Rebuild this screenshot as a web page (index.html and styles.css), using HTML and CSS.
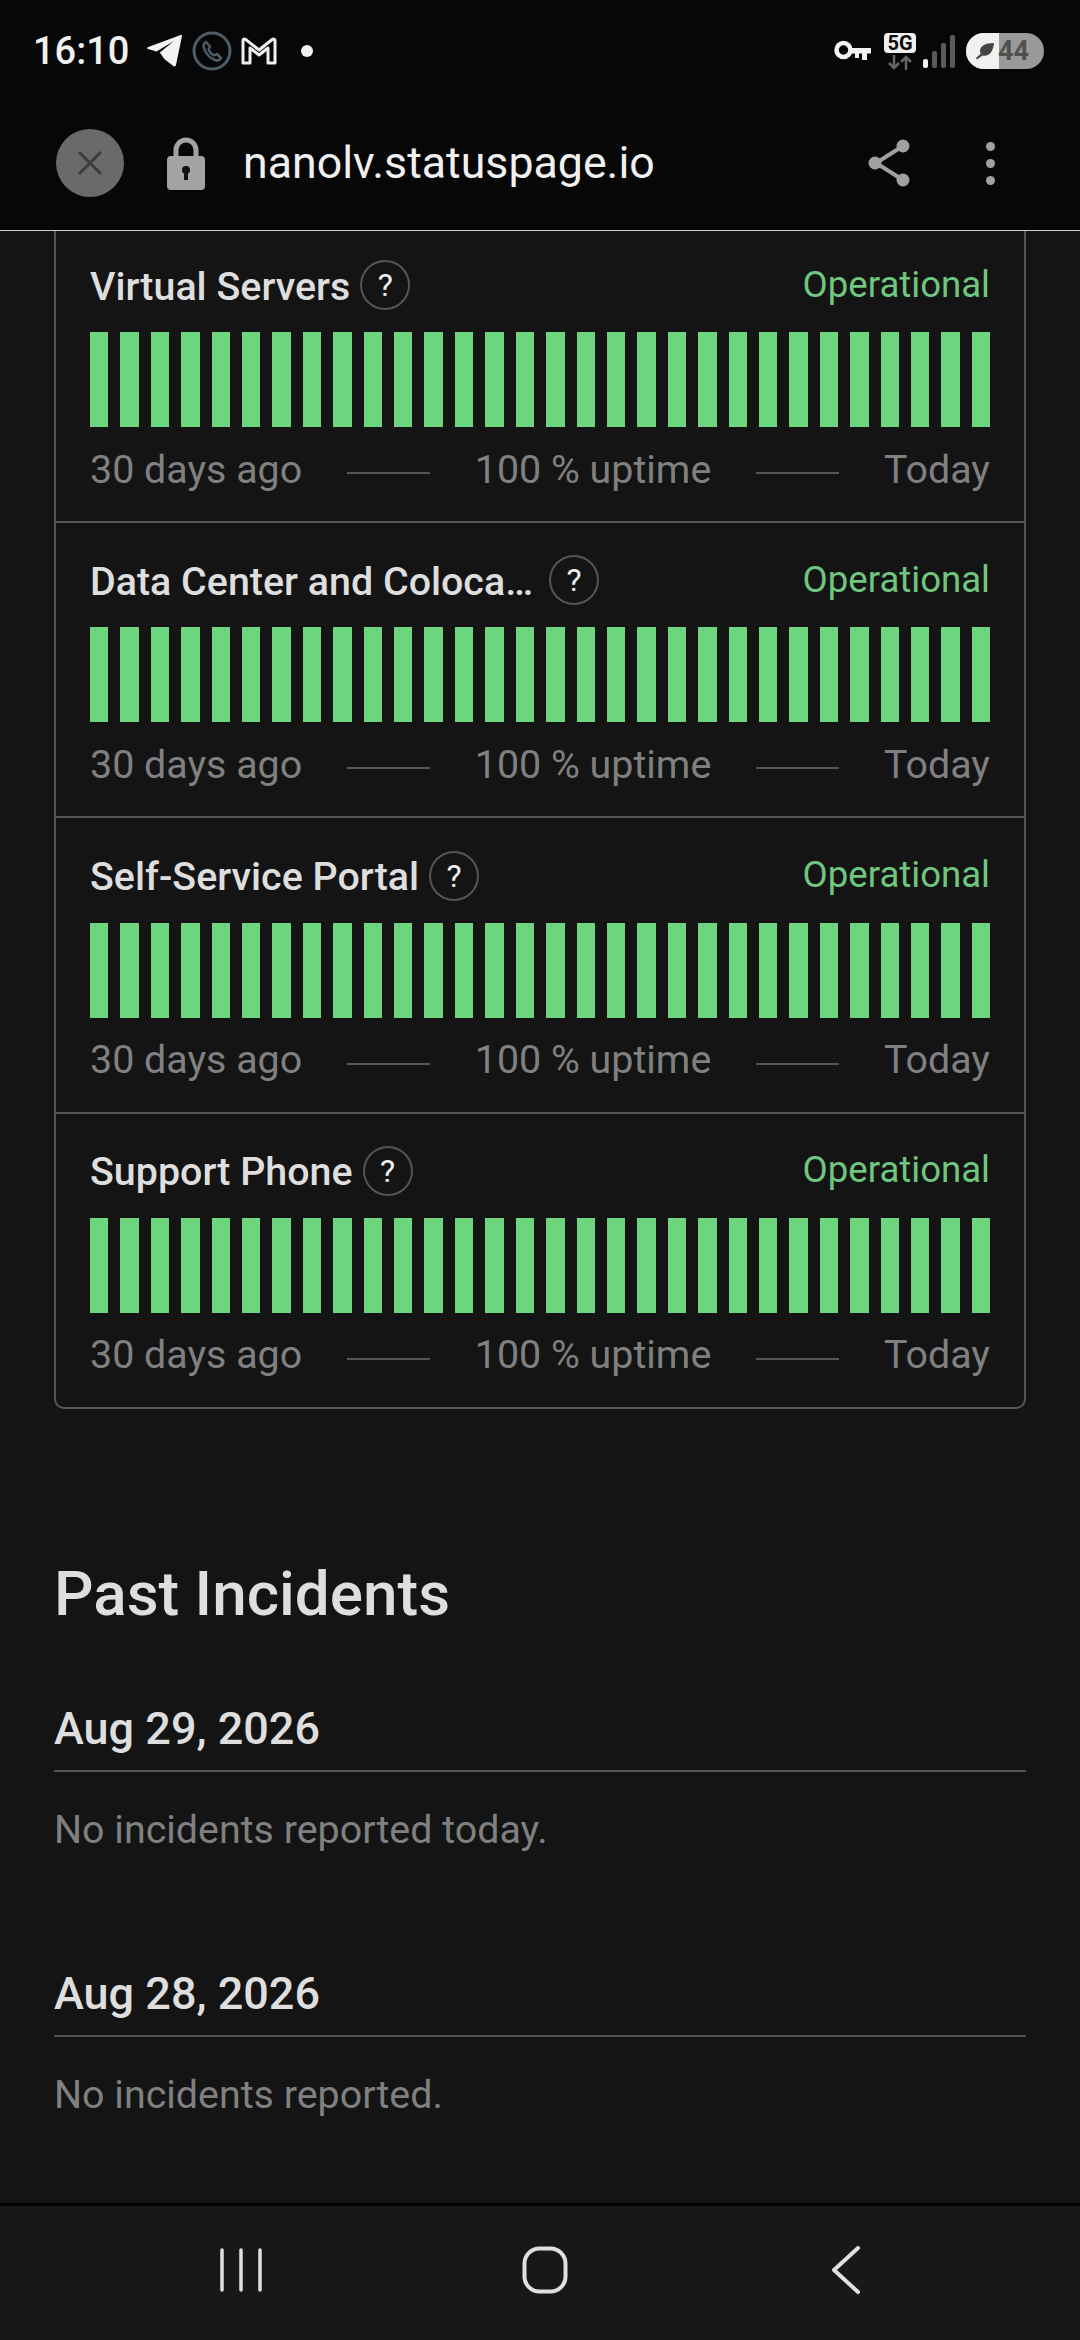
FILE: index.html
```html
<!DOCTYPE html>
<html lang="en">
<head>
    <meta charset="UTF-8">
    <meta name="viewport" content="width=device-width, initial-scale=1.0">
    <title>nanolv.statuspage.io</title>
    <link rel="stylesheet" href="styles.css">
</head>
<body>
    <div class="screen">
        <header class="chrome">
            <div class="status-bar">
                <div class="status-left">
                    <span class="clock">16:10</span>
                    <svg class="ic-telegram" width="36" height="32" viewBox="0 0 36 32"><path d="M35 1 29 30c-.3 1.400-1.500 1.800-2.700 1l-9-7-4.500-6.500L27 6 9.500 16.500 1 14c-1.300-.5-1.300-1.500.3-2.100L33 .2C34.300-.3 35.300 0 35 1Z" fill="#f2f2f2"/></svg>
                    <svg class="ic-call" width="40" height="40" viewBox="0 0 40 40"><circle cx="20" cy="20" r="18" fill="none" stroke="#4d5c65" stroke-width="3"/><path d="M14 11c-2 1-3 3-2 6 1.500 5 6 10 11 12 3 1 5 0 6-2l-4-4-3 1.500c-2-1-4.500-3.500-5.500-6l1.500-3Z" fill="none" stroke="#4d5c65" stroke-width="2.500" stroke-linejoin="round"/></svg>
                    <svg class="ic-mail" width="36" height="28" viewBox="0 0 36 28"><path d="M2 26V3.500c0-1.500 1.500-2 2.500-1.200L18 13 31.500 2.300c1-.8 2.500-.3 2.500 1.200V26H27V11L18 18 9 11V26Z" fill="none" stroke="#f0f0f0" stroke-width="3" stroke-linejoin="round"/></svg>
                    <span class="status-dot"></span>
                </div>
                <div class="status-right">
                    <svg class="ic-key" width="38" height="22" viewBox="0 0 38 22"><circle cx="9.500" cy="10" r="7" fill="none" stroke="#f2f2f2" stroke-width="4.500"/><path d="M16 8h21v5.500h-4V20h-5v-6.500h-3V18h-4v-4.500h-5Z" fill="#f2f2f2"/></svg>
                    <div class="net">
                        <span class="net-badge">5G</span>
                        <svg width="24" height="15" viewBox="0 0 24 15"><path d="M6 0v13M1 8l5 5 5-5M18 15V2M13 7l5-5 5 5" fill="none" stroke="#666" stroke-width="2.500"/></svg>
                    </div>
                    <div class="signal">
                        <span class="sig sig-1"></span>
                        <span class="sig sig-2"></span>
                        <span class="sig sig-3"></span>
                        <span class="sig sig-4"></span>
                    </div>
                    <div class="battery">
                        <span class="battery-fill"></span>
                        <svg class="ic-leaf" width="20" height="17" viewBox="0 0 20 17"><path d="M19 0C10 0 5 3 5 8c0 1 .3 2 .8 2.800L1 15l1 1.500 5.500-4C13 14 18 10 19 0Z" fill="#444"/></svg>
                        <span class="battery-num">44</span>
                    </div>
                </div>
            </div>
            <div class="toolbar">
                <div class="close-btn">
                    <svg width="24" height="24" viewBox="0 0 24 24"><path d="M1 1 23 23M23 1 1 23" stroke="#3c3c3c" stroke-width="3"/></svg>
                </div>
                <svg class="ic-lock" width="38" height="53" viewBox="0 0 38 53"><path d="M9 21V13a10 10 0 0 1 20 0v8" fill="none" stroke="#a3a3a3" stroke-width="5"/><rect y="19" width="38" height="34" rx="4" fill="#a3a3a3"/><circle cx="19" cy="33" r="4" fill="#111"/><rect x="17" y="34" width="4" height="9" fill="#111"/></svg>
                <span class="url">nanolv.statuspage.io</span>
                <svg class="ic-share" width="44" height="48" viewBox="0 0 44 48"><path d="M35 7 8 24l27 17" fill="none" stroke="#a0a0a0" stroke-width="4"/><circle cx="35" cy="7" r="6.500" fill="#a0a0a0"/><circle cx="7" cy="24" r="6.500" fill="#a0a0a0"/><circle cx="35" cy="41" r="6.500" fill="#a0a0a0"/></svg>
                <div class="menu-dots"><span></span><span></span><span></span></div>
            </div>
        </header>

        <main class="content">
            <div class="components">
                <div class="comp first">
                    <div class="comp-head">
                        <span class="comp-name">Virtual Servers</span>
                        <span class="help">?</span>
                        <span class="comp-status">Operational</span>
                    </div>
                    <div class="bars"><i></i><i></i><i></i><i></i><i></i><i></i><i></i><i></i><i></i><i></i><i></i><i></i><i></i><i></i><i></i><i></i><i></i><i></i><i></i><i></i><i></i><i></i><i></i><i></i><i></i><i></i><i></i><i></i><i></i><i></i></div>
                    <div class="legend">
                        <span>30 days ago</span><span class="spacer"></span><span>100 % uptime</span><span class="spacer"></span><span>Today</span>
                    </div>
                </div>
                <div class="comp">
                    <div class="comp-head">
                        <span class="comp-name clipped">Data Center and Coloca…</span>
                        <span class="help">?</span>
                        <span class="comp-status">Operational</span>
                    </div>
                    <div class="bars"><i></i><i></i><i></i><i></i><i></i><i></i><i></i><i></i><i></i><i></i><i></i><i></i><i></i><i></i><i></i><i></i><i></i><i></i><i></i><i></i><i></i><i></i><i></i><i></i><i></i><i></i><i></i><i></i><i></i><i></i></div>
                    <div class="legend">
                        <span>30 days ago</span><span class="spacer"></span><span>100 % uptime</span><span class="spacer"></span><span>Today</span>
                    </div>
                </div>
                <div class="comp">
                    <div class="comp-head">
                        <span class="comp-name">Self-Service Portal</span>
                        <span class="help">?</span>
                        <span class="comp-status">Operational</span>
                    </div>
                    <div class="bars"><i></i><i></i><i></i><i></i><i></i><i></i><i></i><i></i><i></i><i></i><i></i><i></i><i></i><i></i><i></i><i></i><i></i><i></i><i></i><i></i><i></i><i></i><i></i><i></i><i></i><i></i><i></i><i></i><i></i><i></i></div>
                    <div class="legend">
                        <span>30 days ago</span><span class="spacer"></span><span>100 % uptime</span><span class="spacer"></span><span>Today</span>
                    </div>
                </div>
                <div class="comp">
                    <div class="comp-head">
                        <span class="comp-name">Support Phone</span>
                        <span class="help">?</span>
                        <span class="comp-status">Operational</span>
                    </div>
                    <div class="bars"><i></i><i></i><i></i><i></i><i></i><i></i><i></i><i></i><i></i><i></i><i></i><i></i><i></i><i></i><i></i><i></i><i></i><i></i><i></i><i></i><i></i><i></i><i></i><i></i><i></i><i></i><i></i><i></i><i></i><i></i></div>
                    <div class="legend">
                        <span>30 days ago</span><span class="spacer"></span><span>100 % uptime</span><span class="spacer"></span><span>Today</span>
                    </div>
                </div>
            </div>

            <h2 class="past-title">Past Incidents</h2>

            <section class="day">
                <h3 class="day-date">Aug 29, 2026</h3>
                <p class="day-note">No incidents reported today.</p>
            </section>
            <section class="day">
                <h3 class="day-date">Aug 28, 2026</h3>
                <p class="day-note">No incidents reported.</p>
            </section>
        </main>

        <nav class="nav-bar">
            <svg width="44" height="46" viewBox="0 0 44 46"><path d="M3 3v40M22 3v40M41 3v40" stroke="#e0e0e0" stroke-width="3.500" stroke-linecap="round"/></svg>
            <svg class="nav-home" width="46" height="48" viewBox="0 0 46 48"><rect x="2.500" y="2.500" width="41" height="43" rx="15" fill="none" stroke="#e0e0e0" stroke-width="4"/></svg>
            <svg class="nav-back" width="30" height="48" viewBox="0 0 30 48"><path d="M27 2 3 24l24 22" fill="none" stroke="#e0e0e0" stroke-width="4" stroke-linecap="round" stroke-linejoin="round"/></svg>
        </nav>
    </div>
</body>
</html>
```

FILE: styles.css
```css
* {
    box-sizing: border-box;
}

body {
    margin: 0;
    background: #141414;
    font-family: 'Roboto', sans-serif;
}

.screen {
    width: 1080px;
    height: 2340px;
    display: flex;
    flex-direction: column;
    overflow: hidden;
}

/* browser chrome */
.chrome {
    height: 231px;
    flex: none;
    background: #070707;
    border-bottom: 1px solid #d0d0d0;
}

.status-bar {
    height: 90px;
    padding: 12px 36px 0 33px;
    display: flex;
    justify-content: space-between;
    align-items: center;
}

.status-left,
.status-right {
    display: flex;
    align-items: center;
}

.clock {
    font-size: 38px;
    font-weight: 500;
    color: #f0f0f0;
    width: 114px;
}

.ic-call {
    margin: 0 0 0 9px;
}

.ic-mail {
    margin-left: 9px;
}

.status-dot {
    width: 12px;
    height: 12px;
    margin-left: 24px;
    border-radius: 50%;
    background: #f0f0f0;
}

.ic-key {
    margin-right: 12px;
}

.net {
    width: 32px;
    display: flex;
    flex-direction: column;
    align-items: center;
    gap: 2px;
    margin-right: 7px;
}

.net-badge {
    width: 32px;
    height: 20px;
    border-radius: 4px;
    background: #f0f0f0;
    color: #0a0a0a;
    font-size: 20px;
    font-weight: 700;
    line-height: 20px;
    text-align: center;
}

.signal {
    display: flex;
    align-items: flex-end;
    gap: 4px;
    height: 34px;
    margin-right: 11px;
}

.sig {
    width: 5px;
    border-radius: 2px;
    background: #5a5a5a;
}

.sig-1 {
    height: 9px;
    background: #f0f0f0;
}

.sig-2 {
    height: 17px;
}

.sig-3 {
    height: 25px;
}

.sig-4 {
    height: 33px;
}

.battery {
    position: relative;
    width: 78px;
    height: 36px;
    border-radius: 18px;
    background: #9a9a9a;
    overflow: hidden;
    display: flex;
    align-items: center;
}

.battery-fill {
    position: absolute;
    left: 0;
    top: 0;
    width: 33px;
    height: 36px;
    background: #f0f0f0;
}

.ic-leaf {
    position: relative;
    margin-left: 9px;
}

.battery-num {
    position: relative;
    margin-left: 3px;
    font-size: 27px;
    font-weight: 700;
    color: #505050;
}

.toolbar {
    height: 140px;
    padding: 6px 85px 0 56px;
    display: flex;
    align-items: center;
}

.close-btn {
    width: 68px;
    height: 68px;
    border-radius: 50%;
    background: #6a6a6a;
    display: flex;
    justify-content: center;
    align-items: center;
}

.ic-lock {
    margin-left: 43px;
}

.url {
    margin-left: 38px;
    font-size: 44.7px;
    color: #f0f0f0;
    flex: 1;
}

.ic-share {
    margin-right: 74px;
}

.menu-dots {
    display: flex;
    flex-direction: column;
    gap: 8px;
}

.menu-dots span {
    width: 9px;
    height: 9px;
    border-radius: 50%;
    background: #a0a0a0;
}

/* page */
.content {
    flex: 1;
    padding: 0 54px;
    overflow: hidden;
}

.components {
    border: 2px solid #555;
    border-top: none;
    border-radius: 0 0 10px 10px;
}

.comp {
    padding: 32.3px 34px 27px;
    border-top: 2px solid #555;
}

.comp.first {
    padding-top: 29px;
    border-top: none;
}

.comp-head {
    height: 50px;
    display: flex;
    align-items: center;
}

.comp-name {
    padding-top: 2px;
    font-size: 39.4px;
    font-weight: 500;
    color: #dedede;
}

.comp-name.clipped {
    min-width: 449px;
}

.help {
    width: 50px;
    height: 50px;
    margin-left: 10px;
    border: 2px solid #555;
    border-radius: 50%;
    color: #f0f0f0;
    font-size: 32px;
    line-height: 46px;
    text-align: center;
}

.comp-status {
    margin-left: auto;
    margin-bottom: 2px;
    font-size: 36.6px;
    color: #6fc67e;
}

.bars {
    display: flex;
    gap: 12px;
    height: 95px;
    margin-top: 22px;
}

.bars i {
    flex: 1;
    background: #6dd57e;
}

.legend {
    height: 50px;
    margin-top: 17px;
    display: flex;
    justify-content: space-between;
    align-items: center;
    font-size: 39.4px;
    color: #808080;
}

.spacer {
    width: 83px;
    height: 2px;
    margin-top: 8px;
    background: #555;
}

.past-title {
    margin: 150.5px 0 75px;
    font-size: 62px;
    font-weight: 500;
    line-height: 70px;
    color: #dedede;
}

.day + .day {
    margin-top: 116.5px;
}

.day-date {
    margin: 0;
    font-size: 45px;
    font-weight: 500;
    line-height: 50px;
    padding-bottom: 16px;
    border-bottom: 2px solid #555;
    color: #dedede;
}

.day-note {
    margin: 34.5px 0 0;
    font-size: 39.4px;
    line-height: 46px;
    color: #808080;
}

/* android nav */
.nav-bar {
    height: 137px;
    flex: none;
    background: #17181a;
    border-top: 3px solid #000;
    display: flex;
    align-items: center;
    padding: 0 219px 6px;
}

.nav-home {
    margin-left: 259px;
}

.nav-back {
    margin-left: 263px;
}
```
